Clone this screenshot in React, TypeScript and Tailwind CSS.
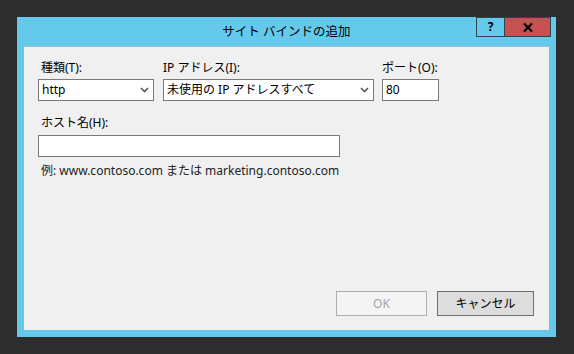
const font = { fontFamily: '"Noto Sans", "Noto Sans CJK JP", sans-serif' }

function Chevron() {
  return (
    <svg width="9" height="6" viewBox="0 0 9 6">
      <path d="M1 1 L4.5 4.5 L8 1" fill="none" stroke="#555" strokeWidth="1.6" />
    </svg>
  )
}

function Select({ value, width }: { value: string; width: string }) {
  return (
    <div
      className={`flex h-[22px] ${width} items-center justify-between border border-[#7a7a7a] bg-white pl-[3px] pr-[4px] text-[12px] text-black`}
    >
      <span>{value}</span>
      <Chevron />
    </div>
  )
}

function Label({ children, indent }: { children: React.ReactNode; indent?: boolean }) {
  return (
    <div className={`h-[16px] text-[12px] leading-[16px] text-black ${indent ? 'pl-[3px]' : ''}`}>
      {children}
    </div>
  )
}

export default function App() {
  return (
    <div className="h-[354px] w-[574px] bg-[#2d2d2d] pl-[17px] pt-[17px]" style={font}>
      <div className="flex h-[320px] w-[539px] flex-col bg-[#64c9eb] px-[7px] pb-[7px]">
        <div className="relative flex h-[29px] shrink-0 items-center justify-center text-[12.5px] text-black">
          <span className="pt-[1px]">サイト バインドの追加</span>
          <div className="absolute right-[-2px] top-0 flex h-[20px]">
            <div className="flex w-[28px] items-center justify-center border border-r-0 border-[#2e4652] text-[12px] font-bold">
              ?
            </div>
            <div className="flex w-[47px] items-center justify-center border border-[#2e4652] bg-[#c75050]">
              <svg width="10" height="9" viewBox="0 0 10 9">
                <path d="M1 0.5 L9 8.5 M9 0.5 L1 8.5" stroke="#000" strokeWidth="2.2" />
              </svg>
            </div>
          </div>
        </div>
        <div className="flex flex-1 flex-col border-t border-[#9cbfcf] bg-[#f0f0f0] pl-[14px] pr-[15px] pt-[13px] pb-[14px]">
          <div className="flex gap-[8px]">
            <div className="flex flex-col gap-[3px]">
              <Label indent>種類(T):</Label>
              <Select value="http" width="w-[116px]" />
            </div>
            <div className="ml-[1px] flex flex-col gap-[3px]">
              <Label>IP アドレス(I):</Label>
              <Select value="未使用の IP アドレスすべて" width="w-[211px]" />
            </div>
            <div className="flex flex-col gap-[3px]">
              <Label>ポート(O):</Label>
              <div className="flex h-[22px] w-[57px] items-center border border-[#7a7a7a] bg-white pl-[3px] text-[12px] text-black">
                80
              </div>
            </div>
          </div>
          <div className="mt-[14px] flex flex-col gap-[4px]">
            <Label indent>ホスト名(H):</Label>
            <div className="h-[22px] w-[302px] border border-[#7a7a7a] bg-white" />
          </div>
          <div className="mt-[6px] pl-[3px] text-[12px] leading-[16px] text-[#222]">
            例: www.contoso.com または marketing.contoso.com
          </div>
          <div className="mt-auto flex justify-end gap-[10px]">
            <button className="flex h-[25px] w-[91px] items-center justify-center border border-[#adadad] bg-[#f4f4f4] text-[12px] text-[#a3a3a3]">
              OK
            </button>
            <button className="flex h-[25px] w-[97px] items-center justify-center border border-[#707070] bg-[#dddddd] text-[12px] text-black">
              キャンセル
            </button>
          </div>
        </div>
      </div>
    </div>
  )
}
